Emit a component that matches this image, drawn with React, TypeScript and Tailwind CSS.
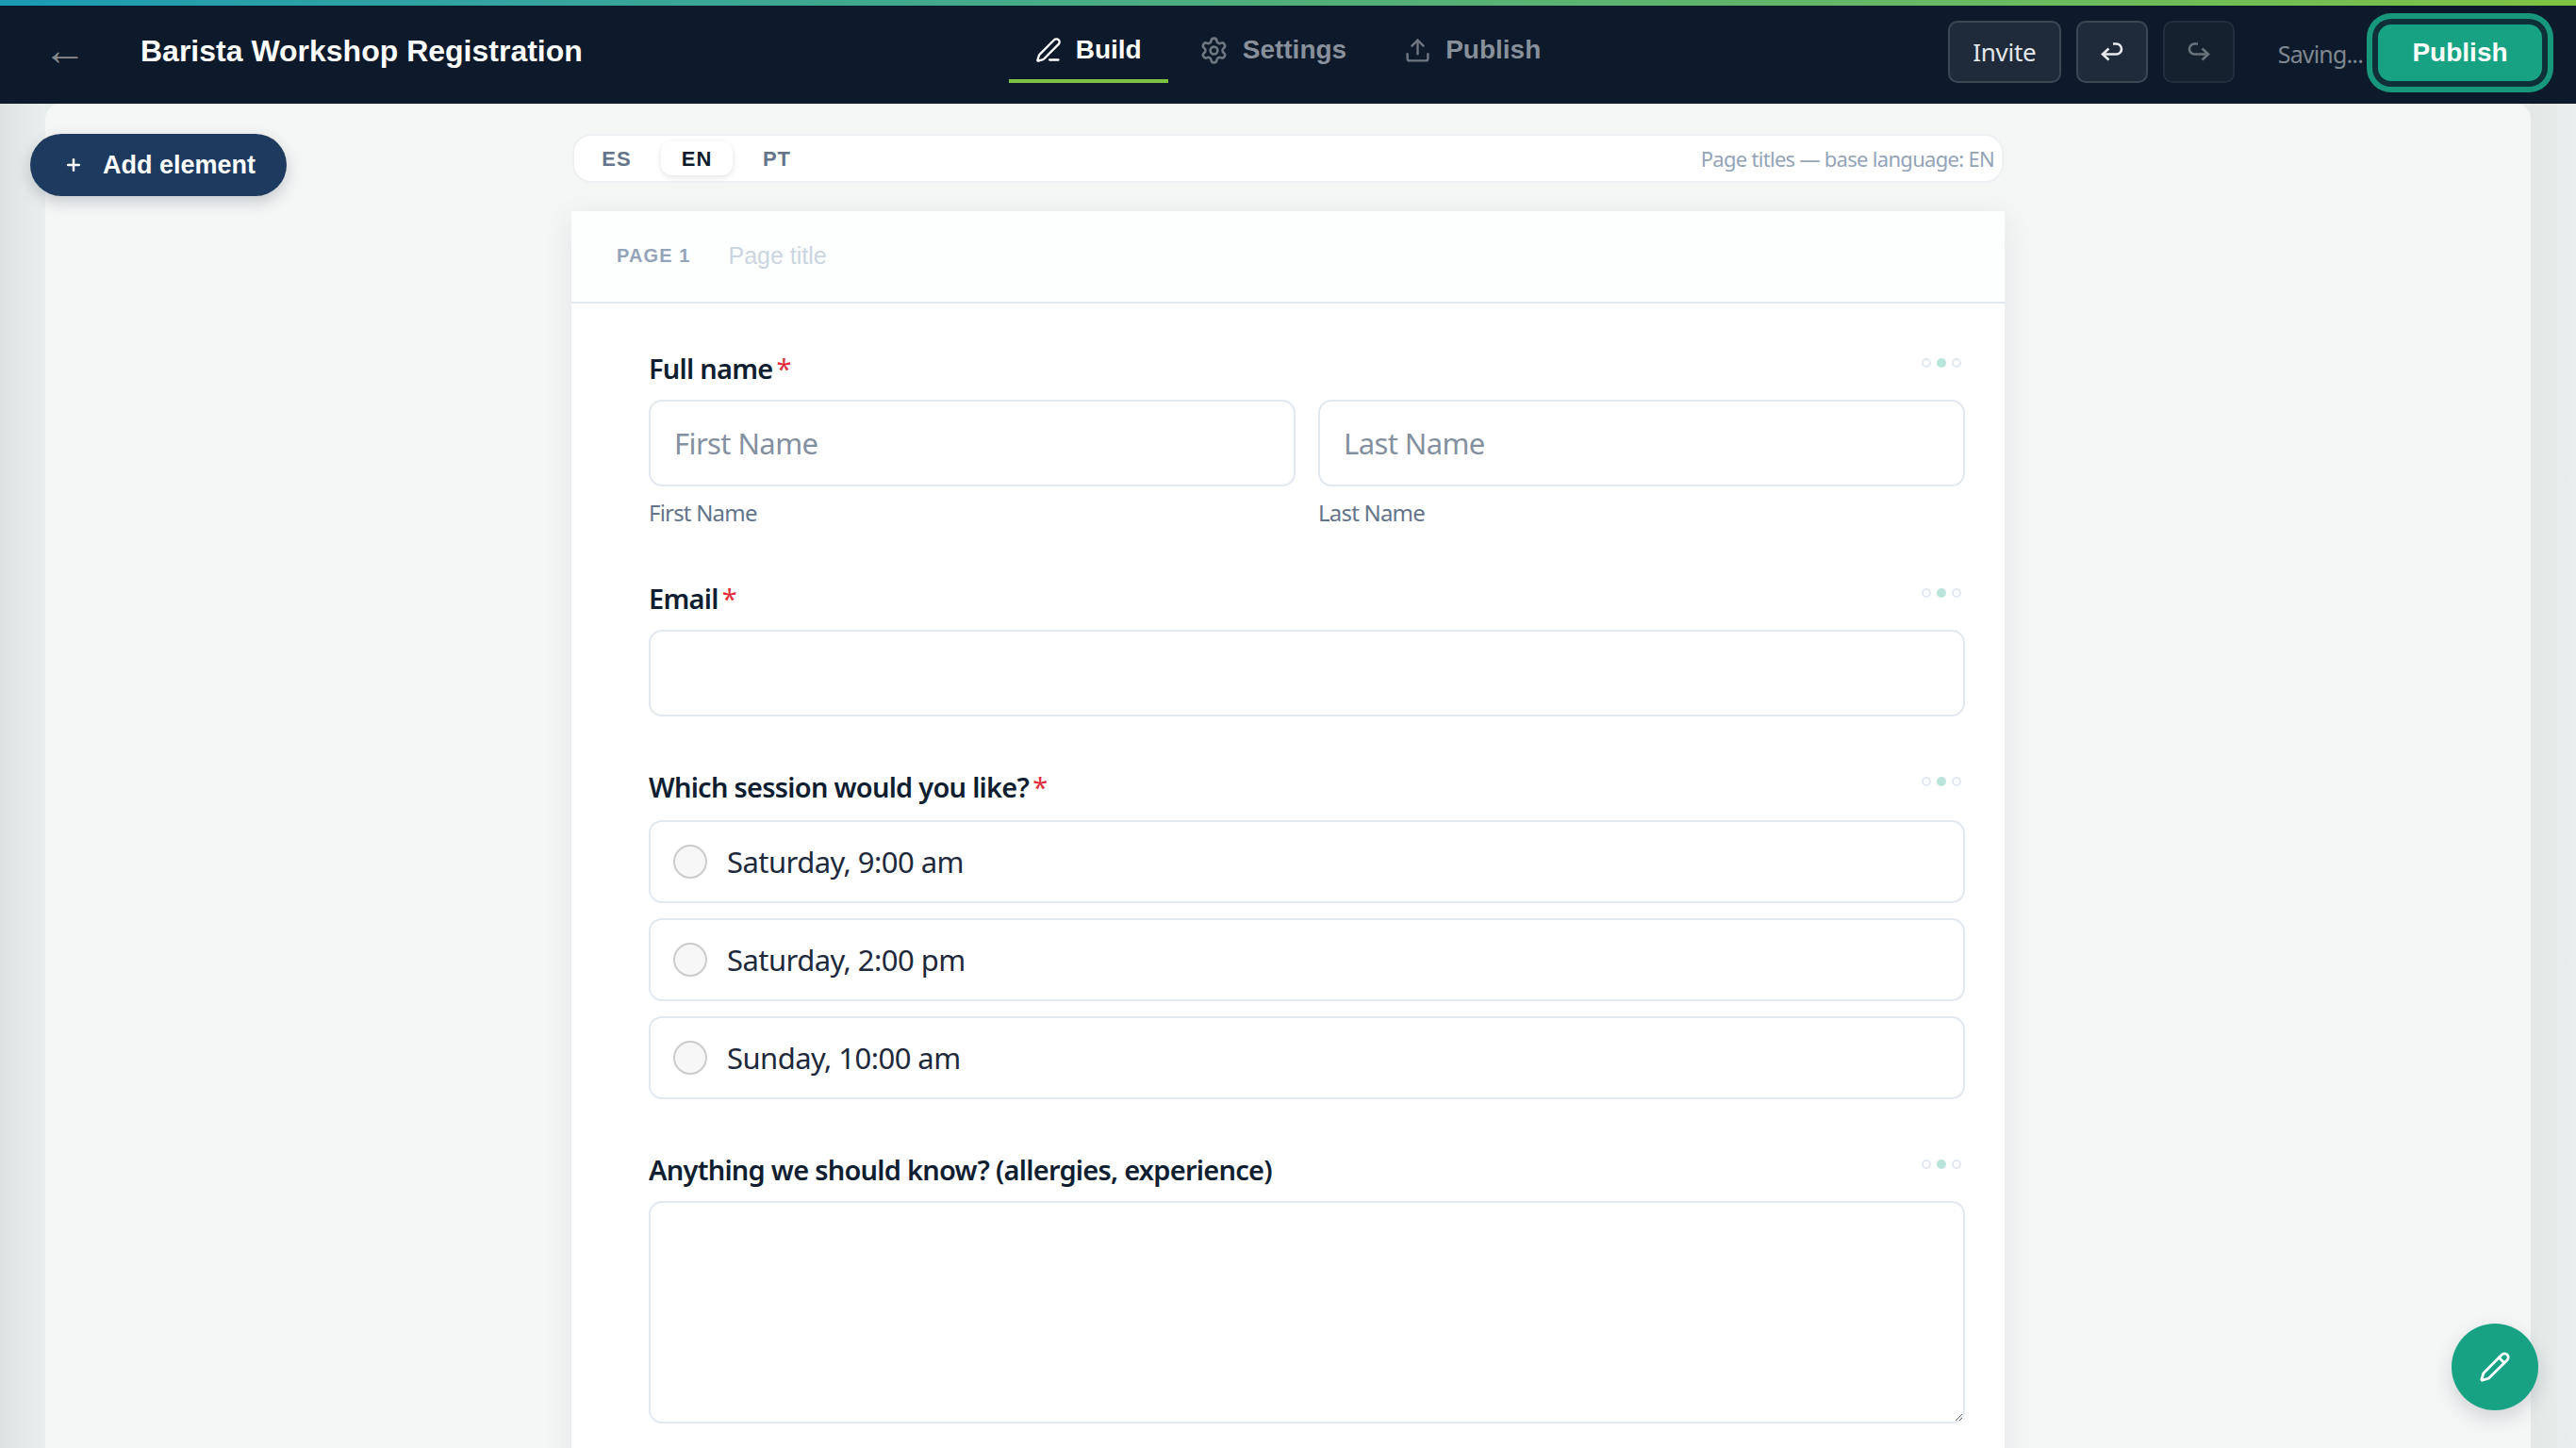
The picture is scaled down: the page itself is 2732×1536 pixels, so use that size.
import { PenLine, Settings, Upload, Pencil, Plus } from "lucide-react";

const SANS = "font-['Noto_Sans',sans-serif]";
const ARIAL = "font-['Liberation_Sans',Arial,sans-serif]";

function Tab({ icon, label, active }: { icon: React.ReactNode; label: string; active?: boolean }) {
  return (
    <div
      className={`flex h-[68px] items-center gap-[15px] border-b-4 px-[28px] pt-[2px] text-[28px] font-bold ${
        active ? "border-[#7dc242] text-white" : "border-transparent text-[#87909b]"
      }`}
    >
      {icon}
      <span>{label}</span>
    </div>
  );
}

function Dots() {
  return (
    <div className="flex items-center gap-[6px]">
      <span className="h-[10px] w-[10px] rounded-full border-2 border-[#e2e8f0]" />
      <span className="h-[10px] w-[10px] rounded-full bg-[#b8e4d9]" />
      <span className="h-[10px] w-[10px] rounded-full border-2 border-[#e2e8f0]" />
    </div>
  );
}

function FieldLabel({ text, required }: { text: string; required?: boolean }) {
  return (
    <div className="flex h-[36px] items-start justify-between pr-[2px]">
      <div className="text-[29px] leading-[36px] font-semibold tracking-[-0.75px] text-[#0f1e30]">
        {text}
        {required && <span className="ml-[4px] font-normal text-[#e02d3c]">*</span>}
      </div>
      <div className="pt-[7px] pr-[2px]">
        <Dots />
      </div>
    </div>
  );
}

function Option({ label }: { label: string }) {
  return (
    <div className="flex h-[88px] items-center rounded-[14px] border-2 border-[#e2e8f0] pl-[24px]">
      <span className="h-[36px] w-[36px] rounded-full border-2 border-[#cccccc] bg-[#f7f7f7]" />
      <span className="ml-[21px] text-[31px] tracking-[-0.55px] text-[#1e293b]">{label}</span>
    </div>
  );
}

const inputClass =
  "h-[92px] w-full rounded-[14px] border-2 border-[#e2e8f0] bg-white px-[25px] text-[31px] tracking-[-0.6px] outline-none placeholder:text-[#84909f]";

export default function App() {
  return (
    <div className={`flex h-screen flex-col overflow-hidden bg-[#e6ebeb] ${SANS}`}>
      {/* top bar */}
      <div className="h-[6px] w-full bg-gradient-to-r from-[#1b9bb3] via-[#4fae7a] to-[#7dc242]" />
      <header className={`grid h-[104px] shrink-0 grid-cols-[1fr_auto_1fr] bg-[#0c1a2b] ${ARIAL}`}>
        <div className="flex items-center pb-[8px] pl-[46px]">
          <span className="-mt-[3px] w-[37px] text-[46px] leading-none text-[#85888e]">←</span>
          <span className="ml-[66px] text-[32px] font-bold text-white">Barista Workshop Registration</span>
        </div>

        <div className="flex gap-[5px] pt-[14px]">
          <Tab active label="Build" icon={<PenLine size={28} strokeWidth={2} />} />
          <Tab label="Settings" icon={<Settings size={31} strokeWidth={2} className="text-[#6f7782]" />} />
          <Tab label="Publish" icon={<Upload size={29} strokeWidth={2} className="text-[#6f7782]" />} />
        </div>

        <div className="flex items-start justify-end pt-[16px] pr-[36px]">
          <button className={`h-[66px] w-[120px] rounded-[10px] border-2 border-[#3d4855] bg-[#1f2b3b] text-[26px] tracking-[-0.3px] text-[#e4e8ec] ${SANS}`}>
            Invite
          </button>
          <button className="ml-[16px] flex h-[66px] w-[76px] items-center justify-center rounded-[10px] border-2 border-[#3d4855] bg-[#1f2b3b] text-[#e8ebee]">
            <svg width="24" height="20" viewBox="0 0 24 20" fill="none" stroke="currentColor" strokeWidth="2.6">
              <path d="M2 12.5H16.5A5.5 5.5 0 0 0 16.5 1.5H13" />
              <path d="M8.5 6.5L2 12.5L8.5 18.5" />
            </svg>
          </button>
          <button className="ml-[16px] flex h-[66px] w-[76px] items-center justify-center rounded-[10px] border-2 border-[#222e3d] bg-[#15212f] text-[#6a727c]">
            <svg width="24" height="20" viewBox="0 0 24 20" fill="none" stroke="currentColor" strokeWidth="2.6">
              <path d="M22 12.5H7.5A5.5 5.5 0 0 1 7.5 1.5H11" />
              <path d="M15.5 6.5L22 12.5L15.5 18.5" />
            </svg>
          </button>
          <span className={`ml-[46px] mr-[16px] self-center pb-[16px] text-[25px] tracking-[-0.85px] text-[#7f8791] ${SANS}`}>Saving...</span>
          <button className="mt-[4px] h-[60px] w-[174px] rounded-[14px] bg-[#17a383] text-[28px] font-bold text-white shadow-[0_0_0_6px_#0e3038,0_0_0_12px_#17977c]">
            Publish
          </button>
        </div>
      </header>

      {/* canvas */}
      <main className="relative flex min-h-0 flex-1">
        <div className="w-[48px] shrink-0 bg-gradient-to-r from-[#dde3e3] to-[#e9eeee]" />
        <div className="min-w-0 flex-1 overflow-hidden rounded-t-[16px] bg-[#f4f6f6] pt-[32px]">
          <div className="mx-auto w-[1520px]">
            {/* language switcher */}
            <div className="mx-[1px] flex h-[52px] items-center justify-between rounded-[20px] border-2 border-[#eef0f3] bg-white pr-[8px] pl-[7px]">
              <div className={`flex items-center text-[22px] font-bold tracking-[1px] text-[#64748b] ${ARIAL}`}>
                <span className="flex h-[36px] w-[76px] items-center justify-center">ES</span>
                <span className="mx-[9px] flex h-[36px] w-[76px] items-center justify-center rounded-[12px] bg-white text-[#0c1a2b] shadow-[0_2px_6px_rgba(15,23,42,0.12)]">
                  EN
                </span>
                <span className="flex h-[36px] w-[76px] items-center justify-center">PT</span>
              </div>
              <span className="text-[22px] tracking-[-0.7px] text-[#94a3b8]">Page titles — base language: EN</span>
            </div>

            {/* page card */}
            <div className="mt-[30px] rounded-t-[8px] bg-white shadow-[0_8px_32px_rgba(15,23,42,0.08)]">
              <div className="flex h-[98px] items-center border-b-2 border-[#e2e8f0] bg-[#fdfefe] pl-[48px]">
                <span className={`mb-[2px] text-[20px] font-bold tracking-[1.1px] text-[#94a3b8] ${ARIAL}`}>PAGE 1</span>
                <span className={`ml-[40px] text-[25px] text-[#cbd5e1] ${ARIAL}`}>Page title</span>
              </div>

              <div className="pt-[51px] pr-[42px] pb-[100px] pl-[82px]">
                <FieldLabel text="Full name" required />
                <div className="mt-[15px] grid grid-cols-2 gap-[24px]">
                  <div>
                    <input className={inputClass} placeholder="First Name" />
                    <div className="mt-[10px] text-[24px] tracking-[-0.8px] text-[#64748b]">First Name</div>
                  </div>
                  <div>
                    <input className={inputClass} placeholder="Last Name" />
                    <div className="mt-[10px] text-[24px] tracking-[-0.8px] text-[#64748b]">Last Name</div>
                  </div>
                </div>

                <div className="mt-[55px]">
                  <FieldLabel text="Email" required />
                  <input className={`mt-[15px] ${inputClass}`} />
                </div>

                <div className="mt-[57px]">
                  <FieldLabel text="Which session would you like?" required />
                  <div className="mt-[17px] flex flex-col gap-[16px]">
                    <Option label="Saturday, 9:00 am" />
                    <Option label="Saturday, 2:00 pm" />
                    <Option label="Sunday, 10:00 am" />
                  </div>
                </div>

                <div className="mt-[57px]">
                  <FieldLabel text="Anything we should know? (allergies, experience)" />
                  <textarea className="mt-[15px] block h-[236px] w-full rounded-[14px] border-2 border-[#e2e8f0] outline-none" />
                </div>
              </div>
            </div>
          </div>
        </div>
        <div className="w-[48px] shrink-0 bg-gradient-to-r from-[#e3e8e7] to-[#eaeeee]" />

        {/* floating buttons */}
        <button className={`absolute top-[32px] left-[32px] flex h-[66px] w-[272px] items-center rounded-full bg-[#1e3a5f] pl-[36px] text-[27px] font-bold text-white shadow-[0_6px_16px_rgba(15,23,42,0.2)] ${ARIAL}`}>
          <Plus size={20} strokeWidth={3} />
          <span className="ml-[21px]">Add element</span>
        </button>
        <button className="absolute top-[1294px] left-[2600px] flex h-[92px] w-[92px] items-center justify-center rounded-full bg-[#17a383] text-white shadow-[0_8px_20px_rgba(15,23,42,0.15)]">
          <Pencil size={34} strokeWidth={2} />
        </button>
      </main>
    </div>
  );
}
